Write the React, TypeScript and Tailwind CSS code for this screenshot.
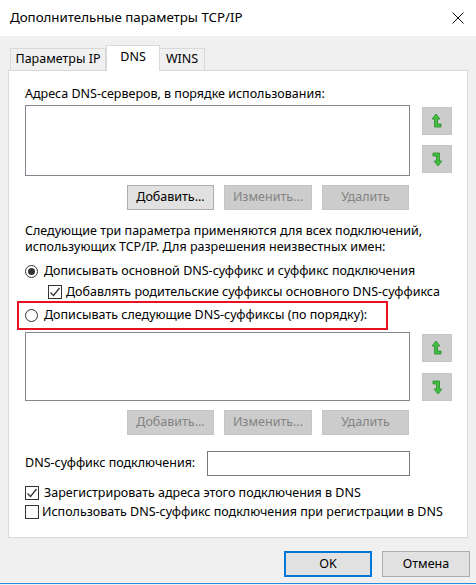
import React from 'react';

const FONT = { fontFamily: '"Noto Sans", "Open Sans", sans-serif' };

const ArrowUp = () => (
  <svg width="10" height="16" viewBox="0 0 10 16">
    <path d="M4 1 L8 6 L5.5 6 L5.5 11 L9 11 L9 14 L2.5 14 L2.5 6 L0 6 Z" fill="#3fc13f" stroke="#2c8a2c" strokeWidth="0.8" strokeLinejoin="round" />
  </svg>
);

const ArrowDown = () => (
  <svg width="10" height="16" viewBox="0 0 10 16">
    <path d="M1 2 L7.5 2 L7.5 10 L10 10 L6 15 L2 10 L4.5 10 L4.5 5 L1 5 Z" fill="#3fc13f" stroke="#2c8a2c" strokeWidth="0.8" strokeLinejoin="round" />
  </svg>
);

const Btn: React.FC<{ label: string; disabled?: boolean; className?: string }> = ({ label, disabled, className }) => (
  <div
    className={`h-[25px] w-[87px] flex items-center justify-center text-[12.5px] border ${
      disabled ? 'bg-[#cccccc] border-[#c4c4c4] text-[#838383]' : 'bg-[#e1e1e1] border-[#adadad] text-black'
    } ${className ?? ''}`}
  >
    {label}
  </div>
);

const ArrowBtn: React.FC<{ up?: boolean }> = ({ up }) => (
  <div className="w-[30px] h-[28px] bg-[#cccccc] border border-[#c4c4c4] flex items-center justify-center">
    {up ? <ArrowUp /> : <ArrowDown />}
  </div>
);

const Radio: React.FC<{ checked?: boolean }> = ({ checked }) => (
  <div className="w-[13px] h-[13px] rounded-full border border-[#333333] bg-white flex items-center justify-center shrink-0">
    {checked && <div className="w-[7px] h-[7px] rounded-full bg-[#333333]" />}
  </div>
);

const Check: React.FC<{ checked?: boolean }> = ({ checked }) => (
  <div className="w-[14px] h-[14px] border border-[#333333] bg-white flex items-center justify-center shrink-0">
    {checked && (
      <svg width="12" height="12" viewBox="0 0 12 12">
        <path d="M1.5 6.5 L4.5 9.5 L10.5 2" fill="none" stroke="#333333" strokeWidth="1.3" />
      </svg>
    )}
  </div>
);

// list box with up/down arrows and the three action buttons
const ListBlock: React.FC<{ addEnabled?: boolean; listH: string; arrowGap: string }> = ({ addEnabled, listH, arrowGap }) => (
  <div className="flex flex-col">
    <div className="flex">
      <div className={`w-[385px] ${listH} bg-white border border-[#828790]`} />
      <div className={`ml-[12px] mt-[2px] flex flex-col ${arrowGap}`}>
        <ArrowBtn up />
        <ArrowBtn />
      </div>
    </div>
    <div className="flex gap-[10px] ml-[102px] mt-[9px]">
      <Btn label="Добавить..." disabled={!addEnabled} />
      <Btn label="Изменить..." disabled className="w-[88px]" />
      <Btn label="Удалить" disabled />
    </div>
  </div>
);

export default function App() {
  return (
    <div className="w-[476px] h-[585px] bg-[#f0f0f0] flex flex-col text-black overflow-hidden" style={FONT}>
      {/* title bar */}
      <div className="h-[36px] bg-white flex items-center justify-between pl-[10px] pr-[12px] shrink-0">
        <span className="text-[13.3px]">Дополнительные параметры TCP/IP</span>
        <svg width="12" height="12" viewBox="0 0 12 12">
          <path d="M0.5 0.5 L11.5 11.5 M11.5 0.5 L0.5 11.5" stroke="#111" strokeWidth="1" />
        </svg>
      </div>

      {/* tabs */}
      <div className="flex items-end ml-[10px] mt-[9px] h-[25px] text-[12.5px] relative z-10">
        <div className="h-[22px] w-[96px] border border-b-0 border-[#d9d9d9] flex items-center justify-center bg-[#f0f0f0]">
          Параметры IP
        </div>
        <div className="h-[26px] -mb-[1px] w-[54px] border border-b-0 border-[#d9d9d9] bg-white flex items-start pt-[2px] justify-center">
          DNS
        </div>
        <div className="h-[22px] w-[45px] border border-b-0 border-l-0 border-[#d9d9d9] flex items-center justify-center bg-[#f0f0f0]">
          WINS
        </div>
      </div>

      {/* panel */}
      <div className="ml-[8px] w-[460px] h-[468px] bg-white border border-[#d9d9d9] flex flex-col pl-[16px] text-[12.5px]">
        <div className="mt-[15px] h-[16px] leading-[16px]">Адреса DNS-серверов, в порядке использования:</div>
        <div className="mt-[3px]">
          <ListBlock addEnabled listH="h-[71px]" arrowGap="gap-[10px]" />
        </div>

        <div className="mt-[13px] leading-[16px] w-[420px]">
          Следующие три параметра применяются для всех подключений, использующих TCP/IP. Для разрешения неизвестных имен:
        </div>

        <div className="mt-[8px] h-[16px] flex items-center gap-[6px]">
          <Radio checked />
          <span>Дописывать основной DNS-суффикс и суффикс подключения</span>
        </div>
        <div className="mt-[5px] h-[16px] flex items-center gap-[4px] ml-[23px]">
          <Check checked />
          <span>Добавлять родительские суффиксы основного DNS-суффикса</span>
        </div>
        <div className="mt-[1px] -ml-[8px] w-[371px] h-[29px] border-2 border-[#e81123] flex items-center gap-[6px] pl-[6px]">
          <Radio />
          <span>Дописывать следующие DNS-суффиксы (по порядку):</span>
        </div>

        <div className="mt-[2px]">
          <ListBlock listH="h-[69px]" arrowGap="gap-[11px]" />
        </div>

        <div className="mt-[16px] flex items-center h-[25px]">
          <span className="w-[182px]">DNS-суффикс подключения:</span>
          <div className="w-[203px] h-[25px] border border-[#7a7a7a] bg-white" />
        </div>
        <div className="mt-[9px] h-[16px] flex items-center gap-[5px]">
          <Check checked />
          <span>Зарегистрировать адреса этого подключения в DNS</span>
        </div>
        <div className="mt-[3px] h-[16px] flex items-center gap-[3px]">
          <Check />
          <span>Использовать DNS-суффикс подключения при регистрации в DNS</span>
        </div>
      </div>

      {/* bottom buttons */}
      <div className="flex justify-end gap-[10px] pr-[6px] mt-[13px] text-[12.5px]">
        <div className="w-[88px] h-[26px] bg-[#e1e1e1] border-2 border-[#0078d7] flex items-center justify-center">OK</div>
        <div className="w-[88px] h-[26px] bg-[#e1e1e1] border border-[#adadad] flex items-center justify-center">Отмена</div>
      </div>
      <div className="flex-1" />
      <div className="h-[1px] bg-[#2b8ae0] mb-[1px]" />
    </div>
  );
}
